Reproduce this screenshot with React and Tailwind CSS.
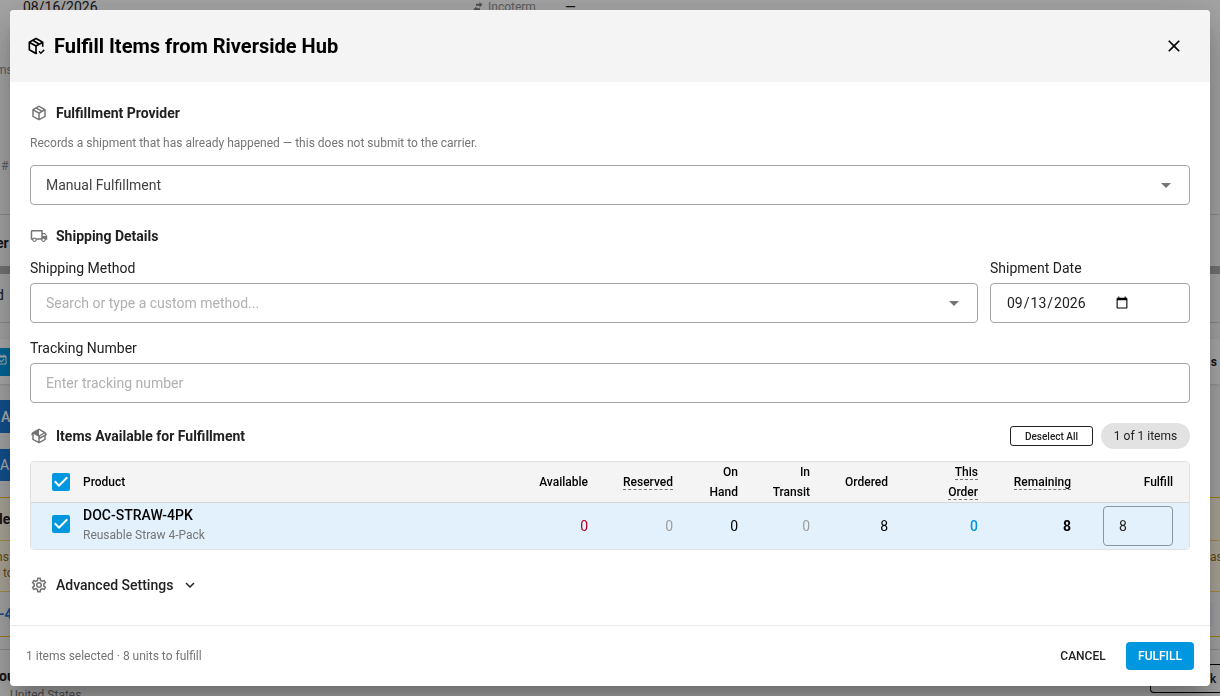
import React, { useState } from 'react';

const ICONS = {
  packageCheck:
    'M13 19.3V12.6L19 9.2V13C19.7 13 20.4 13.1 21 13.3V7.5C21 7.1 20.8 6.8 20.5 6.6L12.6 2.2C12.4 2.1 12.2 2 12 2S11.6 2.1 11.4 2.2L3.5 6.6C3.2 6.8 3 7.1 3 7.5V16.5C3 16.9 3.2 17.2 3.5 17.4L11.4 21.8C11.6 21.9 11.8 22 12 22S12.4 21.9 12.6 21.8L13.5 21.3C13.2 20.7 13.1 20 13 19.3M12 4.2L18 7.5L16 8.6L10.1 5.2L12 4.2M11 19.3L5 15.9V9.2L11 12.6V19.3M12 10.8L6 7.5L8 6.3L14 9.8L12 10.8M21.34 15.84L17.75 19.43L16.16 17.84L15 19L17.75 22L22.5 17.25L21.34 15.84Z',
  packageClosed:
    'M21,16.5C21,16.88 20.79,17.21 20.47,17.38L12.57,21.82C12.41,21.94 12.21,22 12,22C11.79,22 11.59,21.94 11.43,21.82L3.53,17.38C3.21,17.21 3,16.88 3,16.5V7.5C3,7.12 3.21,6.79 3.53,6.62L11.43,2.18C11.59,2.06 11.79,2 12,2C12.21,2 12.41,2.06 12.57,2.18L20.47,6.62C20.79,6.79 21,7.12 21,7.5V16.5M12,4.15L10.11,5.22L16,8.61L17.96,7.5L12,4.15M6.04,7.5L12,10.85L13.96,9.75L8.08,6.35L6.04,7.5M5,15.91L11,19.29V12.58L5,9.21V15.91M19,15.91V9.21L13,12.58V19.29L19,15.91Z',
  packageOpen:
    'M2,10.96C1.5,10.68 1.35,10.07 1.63,9.59L3.13,7C3.24,6.8 3.41,6.66 3.6,6.58L11.43,2.18C11.59,2.06 11.79,2 12,2C12.21,2 12.41,2.06 12.57,2.18L20.47,6.62C20.66,6.72 20.82,6.88 20.91,7.08L22.36,9.6C22.64,10.08 22.47,10.69 22,10.96L21,11.54V16.5C21,16.88 20.79,17.21 20.47,17.38L12.57,21.82C12.41,21.94 12.21,22 12,22C11.79,22 11.59,21.94 11.43,21.82L3.53,17.38C3.21,17.21 3,16.88 3,16.5V10.96C2.7,11.13 2.32,11.14 2,10.96M12,4.15V4.15L12,10.85V10.85L17.96,7.5L12,4.15M5,15.91L11,19.29V12.58L5,9.21V15.91M19,15.91V12.69L14,15.59C13.67,15.77 13.3,15.76 13,15.6V19.29L19,15.91M13.85,13.36L20.13,9.73L19.55,8.72L13.27,12.35L13.85,13.36Z',
  truck:
    'M18 18.5C18.83 18.5 19.5 17.83 19.5 17C19.5 16.17 18.83 15.5 18 15.5C17.17 15.5 16.5 16.17 16.5 17C16.5 17.83 17.17 18.5 18 18.5M19.5 9.5H17V12H21.46L19.5 9.5M6 18.5C6.83 18.5 7.5 17.83 7.5 17C7.5 16.17 6.83 15.5 6 15.5C5.17 15.5 4.5 16.17 4.5 17C4.5 17.83 5.17 18.5 6 18.5M20 8L23 12V17H21C21 18.66 19.66 20 18 20C16.34 20 15 18.66 15 17H9C9 18.66 7.66 20 6 20C4.34 20 3 18.66 3 17H1V6C1 4.89 1.89 4 3 4H17V8H20M3 6V15H3.76C4.31 14.39 5.11 14 6 14C6.89 14 7.69 14.39 8.24 15H15V6H3Z',
  cog:
    'M12,8A4,4 0 0,1 16,12A4,4 0 0,1 12,16A4,4 0 0,1 8,12A4,4 0 0,1 12,8M12,10A2,2 0 0,0 10,12A2,2 0 0,0 12,14A2,2 0 0,0 14,12A2,2 0 0,0 12,10M10,22C9.75,22 9.54,21.82 9.5,21.58L9.13,18.93C8.5,18.68 7.96,18.34 7.44,17.94L4.95,18.95C4.73,19.03 4.46,18.95 4.34,18.73L2.34,15.27C2.21,15.05 2.27,14.78 2.46,14.63L4.57,12.97L4.5,12L4.57,11L2.46,9.37C2.27,9.22 2.21,8.95 2.34,8.73L4.34,5.27C4.46,5.05 4.73,4.96 4.95,5.05L7.44,6.05C7.96,5.66 8.5,5.32 9.13,5.07L9.5,2.42C9.54,2.18 9.75,2 10,2H14C14.25,2 14.46,2.18 14.5,2.42L14.87,5.07C15.5,5.32 16.04,5.66 16.56,6.05L19.05,5.05C19.27,4.96 19.54,5.05 19.66,5.27L21.66,8.73C21.79,8.95 21.73,9.22 21.54,9.37L19.43,11L19.5,12L19.43,13L21.54,14.63C21.73,14.78 21.79,15.05 21.66,15.27L19.66,18.73C19.54,18.95 19.27,19.04 19.05,18.95L16.56,17.95C16.04,18.34 15.5,18.68 14.87,18.93L14.5,21.58C14.46,21.82 14.25,22 14,22H10M11.25,4L10.88,6.61C9.68,6.86 8.62,7.5 7.85,8.39L5.44,7.35L4.69,8.65L6.8,10.2C6.4,11.37 6.4,12.64 6.8,13.8L4.68,15.36L5.43,16.66L7.86,15.62C8.63,16.5 9.68,17.14 10.87,17.38L11.24,20H12.76L13.13,17.39C14.32,17.14 15.37,16.5 16.14,15.62L18.57,16.66L19.32,15.36L17.2,13.81C17.6,12.64 17.6,11.37 17.2,10.2L19.31,8.65L18.56,7.35L16.15,8.39C15.38,7.5 14.32,6.86 13.12,6.62L12.75,4H11.25Z',
  close:
    'M19,6.41L17.59,5L12,10.59L6.41,5L5,6.41L10.59,12L5,17.59L6.41,19L12,13.41L17.59,19L19,17.59L13.41,12L19,6.41Z',
  menuDown: 'M7,10L12,15L17,10H7Z',
  chevronDown: 'M7.41,8.58L12,13.17L16.59,8.58L18,10L12,16L6,10L7.41,8.58Z',
  check: 'M10,17L5,12L6.41,10.58L10,14.17L17.59,6.58L19,8L10,17Z',
  swap: 'M15,2L21,7.5L15,13V9.5H8V5.5H15V2M9,11V14.5H16V18.5H9V22L3,16.5L9,11Z',
  clipboard:
    'M19,3H17V1H15V3H9V1H7V3H5C3.9,3 3,3.9 3,5V19C3,20.1 3.9,21 5,21H19C20.1,21 21,20.1 21,19V5C21,3.9 20.1,3 19,3M19,19H5V7H19V19M10.6,17.2L7,13.6L8.4,12.2L10.6,14.4L15.6,9.4L17,10.8L10.6,17.2Z',
};

function Icon({ name, className }) {
  return (
    <svg viewBox="0 0 24 24" fill="currentColor" aria-hidden="true" className={`shrink-0 ${className}`}>
      <path d={ICONS[name]} />
    </svg>
  );
}

function SectionTitle({ icon, children }) {
  return (
    <h2 className="flex h-[22px] items-center gap-2 text-sm font-bold text-[#212121]">
      <Icon name={icon} className="size-[18px] text-[#757575]" />
      {children}
    </h2>
  );
}

function Checkbox({ label, checked, onChange }) {
  return (
    <label className="grid size-[18px] grid-cols-[18px] grid-rows-[18px] place-items-center">
      <input
        type="checkbox"
        aria-label={label}
        checked={checked}
        onChange={onChange}
        className="col-start-1 row-start-1 size-[18px] appearance-none rounded-xs border-2 border-gray-500 checked:border-[#0096e0] checked:bg-[#0096e0]"
      />
      {checked && <Icon name="check" className="pointer-events-none col-start-1 row-start-1 size-6 text-white" />}
    </label>
  );
}

// Order page that stays visible around the dialog
function OrderPage() {
  return (
    <div className="h-screen overflow-hidden bg-[#f2f2f2] text-sm text-[#212121]" aria-hidden="true">
      <div className="h-[215px] border-b border-[#ccc]">
        <div className="flex h-[14px] items-center pl-[23px]">
          <span className="w-[449px]">08/16/2026</span>
          <Icon name="swap" className="size-3 text-[#757575]" />
          <span className="ml-1 w-[77px] text-xs text-[#8a8a8a]">Incoterm</span>
          <span>—</span>
        </div>
        <div className="-ml-1 mt-12 h-5 text-xs text-[#8a8a8a]">ms</div>
        <div className="mt-[76px] h-5 pl-px text-xs text-[#8a8a8a]">#</div>
      </div>
      <div className="-ml-1 flex h-[51px] items-center pt-1 font-bold">er</div>
      <div className="h-2 bg-[#aaa]" />
      <div className="h-[49px] border-b border-[#ccc]">
        <div className="-ml-1 flex h-[42px] items-center">d</div>
      </div>
      <div className="h-4" />
      <div className="flex h-[45px] items-center justify-between bg-[#fafafa] shadow">
        <span className="flex h-7 w-20 items-center bg-[#0096e0] text-white">
          <Icon name="clipboard" className="-ml-1 size-3 -mt-1" />
        </span>
        <span className="pr-[3px] text-xs font-bold">s</span>
      </div>
      <div className="mt-4 flex h-[33px] w-20 items-center bg-[#1976d2] pl-px font-medium text-white">A</div>
      <div className="mt-4 flex h-8 w-20 items-center bg-[#1976d2] text-white">AI</div>
      <div className="mt-4 border-y border-[#f5b800] bg-[#fcf3e0]">
        <div className="-ml-px flex h-[43px] items-center border-b border-[#f0d060] font-bold">le</div>
        <div className="flex h-[51px] justify-between border-b border-[#f0d060] pt-2 text-xs text-[#8a6d1b]">
          <div className="-ml-1">
            ns
            <div className="pl-[7px]">to</div>
          </div>
          <span className="w-[10px]">ase</span>
        </div>
        <div className="flex h-11 items-center justify-between bg-[#f2f2f2] font-bold text-[#1976d2]">
          <span className="-ml-px">-4</span>
          <span className="mr-[6px] h-6 w-20 rounded bg-[#e8eaf0]" />
        </div>
      </div>
      <div className="mt-3 flex justify-between border-t border-[#ccc]">
        <div className="pt-4">
          <div className="-ml-px font-bold">ou</div>
          <div className="pt-px pl-[10px] text-xs text-[#757575]">United States</div>
        </div>
        <span className="mt-[14px] flex h-[29px] w-[70px] items-center rounded-l border border-r-0 border-black pl-[59px] text-xs font-medium">
          k
        </span>
      </div>
    </div>
  );
}

const columns = [
  { key: 'available', label: 'Available', color: 'text-[#b00020]' },
  { key: 'reserved', label: 'Reserved', width: 'w-[85px]', hint: true, color: 'text-[#9e9e9e]' },
  { key: 'onHand', label: 'On Hand', width: 'w-[65px]', color: 'text-black' },
  { key: 'inTransit', label: 'In Transit', width: 'w-[72px]', color: 'text-[#9e9e9e]' },
  { key: 'ordered', label: 'Ordered', width: 'w-[78px]', color: 'text-black' },
  { key: 'thisOrder', label: 'This Order', width: 'w-[90px]', hint: true, color: 'text-[#0096e0] font-medium' },
  { key: 'remaining', label: 'Remaining', width: 'w-[93px]', hint: true, color: 'text-black font-bold' },
];

const items = [
  {
    sku: 'DOC-STRAW-4PK',
    name: 'Reusable Straw 4-Pack',
    available: 0,
    reserved: 0,
    onHand: 0,
    inTransit: 0,
    ordered: 8,
    thisOrder: 0,
    remaining: 8,
  },
];

function ColumnLabel({ label, hint }) {
  return label.split(' ').map((word, index, words) => (
    <React.Fragment key={word}>
      <span className={hint ? 'border-b border-dashed border-[#757575]' : ''}>{word}</span>
      {/* only the short two-word labels break */}
      {index < words.length - 1 && <br />}
    </React.Fragment>
  ));
}

function ItemsTable({ selected, onToggle, quantity, onQuantityChange }) {
  return (
    <div className="mt-3 overflow-hidden rounded border border-[#e0e0e0]">
      <table className="w-full table-fixed border-collapse">
        <thead>
          <tr className="h-10 border-b border-[#d6d6d6] bg-[#f4f4f4] text-xs leading-5 font-medium text-black">
            <th className="w-11 pl-[21px]">
              <Checkbox label="Select all items" checked={selected} onChange={onToggle} />
            </th>
            <th className="pl-2 text-left font-medium">Product</th>
            {columns.map((column) => (
              <th key={column.key} className={`pr-4 text-right font-medium ${column.width || 'w-[100px]'}`}>
                <ColumnLabel label={column.label} hint={column.hint} />
              </th>
            ))}
            <th className="w-[102px] pr-4 text-right font-medium">Fulfill</th>
          </tr>
        </thead>
        <tbody>
          {items.map((item) => (
            <tr key={item.sku} className={`h-[46px] text-sm ${selected ? 'bg-[#e3f1fc]' : 'bg-white'}`}>
              <td className="pb-1 pl-[21px]">
                <Checkbox label={`Select ${item.sku}`} checked={selected} onChange={onToggle} />
              </td>
              <td className="pb-px pl-2">
                <div className="leading-5 font-medium text-black">{item.sku}</div>
                <div className="text-xs leading-5 text-[#757575]">{item.name}</div>
              </td>
              {columns.map((column) => (
                <td key={column.key} className={`pr-4 text-right ${column.color}`}>
                  {item[column.key]}
                </td>
              ))}
              <td className="pr-4 pl-4">
                <input
                  type="text"
                  inputMode="numeric"
                  aria-label={`Quantity of ${item.sku} to fulfill`}
                  value={quantity}
                  onChange={(e) => onQuantityChange(e.target.value)}
                  className="block h-10 w-full rounded border border-[#8796a3] px-[15px] text-sm text-[#212121]"
                />
              </td>
            </tr>
          ))}
        </tbody>
      </table>
    </div>
  );
}

function App() {
  const [method, setMethod] = useState('');
  const [shipmentDate, setShipmentDate] = useState('2026-09-13');
  const [tracking, setTracking] = useState('');
  const [selected, setSelected] = useState(true);
  const [quantity, setQuantity] = useState('8');
  const [showAdvanced, setShowAdvanced] = useState(false);

  const toggleSelected = () => setSelected(!selected);
  const count = selected ? 1 : 0;

  return (
    <div className="font-[Roboto,sans-serif]">
      <OrderPage />

      <div className="fixed inset-0 flex bg-black/32 p-[10px]">
        <div
          role="dialog"
          aria-labelledby="dialog-title"
          className="flex flex-1 flex-col overflow-hidden rounded bg-white shadow-[0_11px_15px_-7px_rgba(0,0,0,0.2),0_24px_38px_3px_rgba(0,0,0,0.14),0_9px_46px_8px_rgba(0,0,0,0.12)]"
        >
          {/* Header */}
          <header className="flex h-[72px] shrink-0 items-center justify-between bg-[#f4f4f4] pr-[26px] pl-4 text-black">
            <h1 id="dialog-title" className="flex items-center gap-2 text-xl font-bold">
              <Icon name="packageCheck" className="size-5" />
              Fulfill Items from Riverside Hub
            </h1>
            <button type="button" aria-label="Close">
              <Icon name="close" className="size-5" />
            </button>
          </header>

          {/* Body */}
          <main className="flex-1 overflow-y-auto px-5 pt-5">
            <SectionTitle icon="packageClosed">Fulfillment Provider</SectionTitle>
            <p className="mt-2 text-xs leading-[22px] text-[#757575]">
              Records a shipment that has already happened — this does not submit to the carrier.
            </p>
            <div className="relative mt-[11px]">
              <select
                aria-label="Fulfillment Provider"
                className="block h-10 w-full appearance-none rounded border border-[#a6a6a6] bg-white px-[15px] text-sm text-[#424242]"
              >
                <option>Manual Fulfillment</option>
              </select>
              <Icon name="menuDown" className="pointer-events-none absolute top-2 right-3 size-6 text-[#757575]" />
            </div>

            <div className="mt-5">
              <SectionTitle icon="truck">Shipping Details</SectionTitle>
            </div>
            <div className="mt-[11px] flex gap-3 text-sm text-[#212121]">
              <div className="flex-1">
                <label htmlFor="method" className="block leading-5">
                  Shipping Method
                </label>
                <div className="relative mt-[5px]">
                  <input
                    id="method"
                    type="text"
                    role="combobox"
                    aria-expanded="false"
                    placeholder="Search or type a custom method..."
                    value={method}
                    onChange={(e) => setMethod(e.target.value)}
                    className="block h-10 w-full rounded border border-[#a6a6a6] pr-10 pl-[15px] placeholder:text-[#b0b0b0]"
                  />
                  <Icon name="menuDown" className="pointer-events-none absolute top-2 right-3 size-6 text-[#757575]" />
                </div>
              </div>
              <div className="w-[200px]">
                <label htmlFor="shipment-date" className="block leading-5">
                  Shipment Date
                </label>
                <div className="mt-[5px] flex h-10 items-center rounded border border-[#a6a6a6] px-[15px]">
                  <input
                    id="shipment-date"
                    type="date"
                    value={shipmentDate}
                    onChange={(e) => setShipmentDate(e.target.value)}
                    className="w-[125px]"
                  />
                </div>
              </div>
            </div>

            <div className="mt-[15px] text-sm text-[#212121]">
              <label htmlFor="tracking" className="block leading-5">
                Tracking Number
              </label>
              <input
                id="tracking"
                type="text"
                placeholder="Enter tracking number"
                value={tracking}
                onChange={(e) => setTracking(e.target.value)}
                className="mt-[5px] block h-10 w-full rounded border border-[#a6a6a6] px-[15px] placeholder:text-[#b0b0b0]"
              />
            </div>

            {/* Items */}
            <div className="mt-5 flex h-[26px] items-center justify-between">
              <SectionTitle icon="packageOpen">Items Available for Fulfillment</SectionTitle>
              <div className="flex items-center gap-2">
                <button
                  type="button"
                  onClick={toggleSelected}
                  className="h-5 w-[83px] rounded-[3px] border border-[#212121] text-[10px] font-medium text-[#212121]"
                >
                  {selected ? 'Deselect All' : 'Select All'}
                </button>
                <span className="flex h-[26px] w-[89px] items-center justify-center rounded-full bg-[#e2e2e2] text-xs text-[#212121]">
                  {count} of 1 items
                </span>
              </div>
            </div>
            <ItemsTable
              selected={selected}
              onToggle={toggleSelected}
              quantity={quantity}
              onQuantityChange={setQuantity}
            />

            <button
              type="button"
              aria-expanded={showAdvanced}
              onClick={() => setShowAdvanced(!showAdvanced)}
              className="mt-6 flex h-[22px] items-center gap-2 text-sm font-medium text-[#212121]"
            >
              <Icon name="cog" className="size-[18px] text-[#757575]" />
              Advanced Settings
              <Icon name="chevronDown" className="size-[18px]" />
            </button>
          </main>

          {/* Footer */}
          <footer className="flex h-[61px] shrink-0 items-center justify-between border-t border-[#ebebeb] px-4">
            <span className="text-xs text-[#757575]">
              {count} items selected · {selected ? quantity : 0} units to fulfill
            </span>
            <div className="flex items-center gap-2 text-xs font-medium">
              <button type="button" className="h-7 w-[70px] rounded text-[#212121]">
                CANCEL
              </button>
              <button type="button" className="h-7 w-[68px] rounded bg-[#0096e0] text-white">
                FULFILL
              </button>
            </div>
          </footer>
        </div>
      </div>
    </div>
  );
}

export default App;
